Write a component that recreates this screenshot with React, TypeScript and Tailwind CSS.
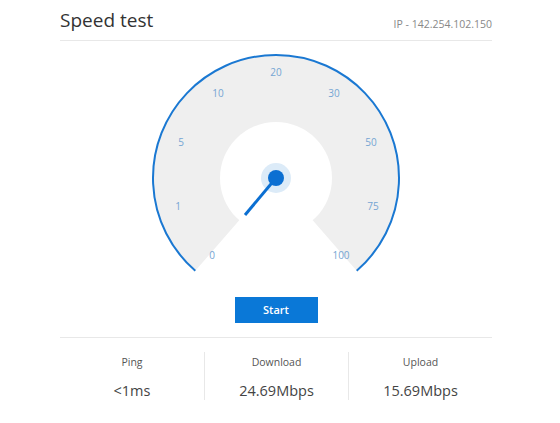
import React from 'react';

const labels: { t: string; x: number; y: number }[] = [
  { t: '0', x: -64, y: 78 },
  { t: '1', x: -98, y: 29 },
  { t: '5', x: -95, y: -35 },
  { t: '10', x: -58, y: -84 },
  { t: '20', x: 0, y: -105 },
  { t: '30', x: 58, y: -84 },
  { t: '50', x: 95, y: -35 },
  { t: '75', x: 97, y: 29 },
  { t: '100', x: 65, y: 78 },
];

const stats = [
  { label: 'Ping', value: '<1ms' },
  { label: 'Download', value: '24.69Mbps' },
  { label: 'Upload', value: '15.69Mbps' },
];

// arc stops a little below the 45deg line, like the original gauge
const END = (49 * Math.PI) / 180;

const Gauge: React.FC = () => {
  const c = 125;
  const r = 123;
  const dx = r * Math.cos(END);
  const dy = r * Math.sin(END);
  return (
    <svg width={250} height={222} viewBox="0 0 250 222">
      <path
        d={`M ${c} ${c} L ${c - dx} ${c + dy} A ${r} ${r} 0 1 1 ${c + dx} ${c + dy} Z`}
        fill="#efefef"
      />
      <circle cx={c} cy={c} r={56} fill="#ffffff" />
      <path
        d={`M ${c - dx} ${c + dy} A ${r} ${r} 0 1 1 ${c + dx} ${c + dy}`}
        fill="none"
        stroke="#1a78d2"
        strokeWidth={2}
      />
      {labels.map((l) => (
        <text
          key={l.t}
          x={c + l.x}
          y={c + l.y}
          textAnchor="middle"
          dominantBaseline="middle"
          fontSize={10}
          fill="#75a5d3"
          fontFamily="'Open Sans', sans-serif"
        >
          {l.t}
        </text>
      ))}
      <circle cx={c} cy={c} r={15} fill="#dcebf8" />
      <line x1={c} y1={c} x2={c - 31} y2={c + 37} stroke="#0b6fd2" strokeWidth={3} />
      <circle cx={c} cy={c} r={8} fill="#0b6fd2" />
    </svg>
  );
};

export default function App() {
  return (
    <div className="w-[560px] h-[423px] bg-white font-['Open_Sans',sans-serif]">
      <div className="ml-[60px] w-[432px] pt-[7px]">
        <div className="flex items-end justify-between border-b border-[#e8e8e8] pb-[6px]">
          <h1 className="text-[19px] leading-[27px] text-[#333]">Speed test</h1>
          <span className="text-[10.5px] leading-[20px] text-[#888]">IP - 142.254.102.150</span>
        </div>
        <div className="flex justify-center mt-[12px]">
          <Gauge />
        </div>
        <div className="flex justify-center mt-[22px]">
          <button className="w-[83px] h-[26px] bg-[#0a78d7] text-white text-[11px] font-semibold">
            Start
          </button>
        </div>
        <div className="mt-[14px] border-t border-[#e8e8e8] pt-[14px] grid grid-cols-3">
          {stats.map((s, i) => (
            <div
              key={s.label}
              className={`flex flex-col items-center h-[48px] ${i > 0 ? 'border-l border-[#e8e8e8]' : ''}`}
            >
              <span className="text-[10.5px] leading-[20px] text-[#555]">{s.label}</span>
              <span className="mt-[8px] text-[14.5px] leading-[22px] text-[#444]">{s.value}</span>
            </div>
          ))}
        </div>
      </div>
    </div>
  );
}
